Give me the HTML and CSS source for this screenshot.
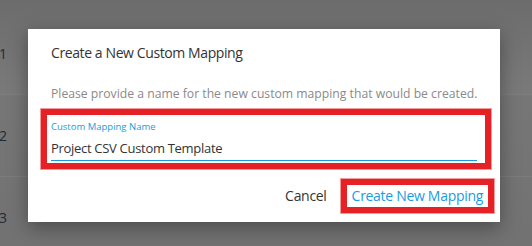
FILE: index.html
```html
<!DOCTYPE html>
<html lang="en">
<head>
    <meta charset="UTF-8">
    <meta name="viewport" content="width=device-width, initial-scale=1.0">
    <title>Create a New Custom Mapping</title>
    <link rel="stylesheet" href="styles.css">
</head>
<body>
    <div class="rows">
        <div class="row"><span class="num">1</span></div>
        <div class="row"><span class="num">2</span></div>
        <div class="row"><span class="num">3</span></div>
    </div>

    <div class="dialog">
        <h2 class="dialog-title">Create a New Custom Mapping</h2>
        <p class="dialog-text">Please provide a name for the new custom mapping that would be created.</p>

        <div class="highlight field-box">
            <label class="field-label">Custom Mapping Name</label>
            <div class="field-input">Project CSV Custom Template</div>
        </div>

        <div class="actions">
            <button class="btn btn-cancel">Cancel</button>
            <div class="highlight">
                <button class="btn btn-primary">Create New Mapping</button>
            </div>
        </div>
    </div>
</body>
</html>
```

FILE: styles.css
```css
body { margin: 0; font-family: "Open Sans", Arial, sans-serif; background: #767676; height: 246px; overflow: hidden; }
.rows { box-sizing: border-box; height: 246px; overflow: hidden; padding-top: 13px; background: linear-gradient(#6c6c6c 0, #7a7a7a 95px, #767676 96px, #727272 246px); }
.row { height: 81px; border-bottom: 1px solid #7c7c7c; display: flex; align-items: center; }
.num { font-size: 14px; color: #1f2a36; margin-left: -1px; }

.dialog { position: absolute; left: 28px; top: 29px; width: 472px; height: 193px; box-sizing: border-box; padding: 14px 23px 9px; background: #fff; box-shadow: 0 6px 18px rgba(0,0,0,0.35); }
.dialog-title { margin: 0; font-size: 14px; line-height: 20px; letter-spacing: -0.4px; font-weight: normal; color: #333; }
.dialog-text { margin: 22px 0 0; font-size: 12.2px; line-height: 18px; color: #8a8a8a; white-space: nowrap; }

.highlight { border: 6px solid #e52125; box-shadow: 0 0 0 1px rgba(229,33,37,0.45); }
.field-box { margin: 6px -14px 0 -10px; padding: 6px 8px 2px 4px; }
.field-label { display: block; font-size: 9.5px; line-height: 12px; color: #1a9be0; }
.field-input { margin-top: 5px; font-size: 13px; line-height: 20px; letter-spacing: -0.3px; padding-bottom: 2px; color: #333; border-bottom: 1px solid #1a9be0; }

.actions { display: flex; justify-content: flex-end; align-items: center; gap: 14px; margin: 10px -17px 0 0; }
.btn { font-family: inherit; font-size: 14px; line-height: 22px; letter-spacing: -0.3px; background: none; border: none; padding: 0 5px; cursor: pointer; }
.btn-cancel { color: #333; padding: 0; }
.btn-primary { color: #1a9be0; display: block; }
```
